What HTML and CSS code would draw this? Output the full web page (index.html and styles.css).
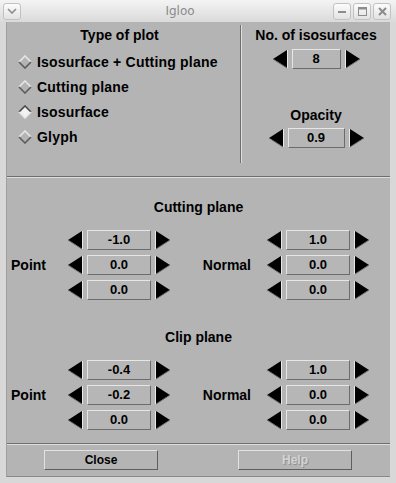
FILE: index.html
```html
<!DOCTYPE html>
<html lang="en">
<head>
  <meta charset="UTF-8">
  <meta name="viewport" content="width=device-width, initial-scale=1.0">
  <title>Igloo</title>
  <link rel="stylesheet" href="styles.css">
</head>
<body>
  <div class="window">
    <div class="titlebar">
      <span class="tb-btn">
        <svg width="10" height="6" viewBox="0 0 10 6"><polyline points="1,1 5,5 9,1" fill="none" stroke="#8c8c8c" stroke-width="1.6"/></svg>
      </span>
      <span class="title">Igloo</span>
      <span class="tb-btn">
        <svg width="8" height="8" viewBox="0 0 8 8"><rect x="0" y="4" width="8" height="2" fill="#8c8c8c"/></svg>
      </span>
      <span class="tb-btn">
        <svg width="9" height="9" viewBox="0 0 9 9"><rect x="0.5" y="0.5" width="8" height="8" fill="none" stroke="#8c8c8c"/><rect x="0.5" y="0.5" width="8" height="2" fill="#8c8c8c"/></svg>
      </span>
      <span class="tb-btn">
        <svg width="9" height="9" viewBox="0 0 9 9"><path d="M1 1 L8 8 M8 1 L1 8" stroke="#8c8c8c" stroke-width="2"/></svg>
      </span>
    </div>

    <div class="client">
      <div class="top">
        <div class="plot-type">
          <h2>Type of plot</h2>
          <label class="radio"><svg class="diamond" viewBox="0 0 14 14"><polygon points="7,1 13,7 7,13 1,7" fill="#b4b4b4"/><polyline points="1,7 7,1 13,7" fill="none" stroke="#e6e6e6" stroke-width="1.6"/><polyline points="1,7 7,13 13,7" fill="none" stroke="#5c5c5c" stroke-width="1.6"/></svg>Isosurface + Cutting plane</label>
          <label class="radio"><svg class="diamond" viewBox="0 0 14 14"><polygon points="7,1 13,7 7,13 1,7" fill="#b4b4b4"/><polyline points="1,7 7,1 13,7" fill="none" stroke="#e6e6e6" stroke-width="1.6"/><polyline points="1,7 7,13 13,7" fill="none" stroke="#5c5c5c" stroke-width="1.6"/></svg>Cutting plane</label>
          <label class="radio"><svg class="diamond" viewBox="0 0 14 14"><polygon points="7,1 13,7 7,13 1,7" fill="#f2f2f2"/><polyline points="1,7 7,1 13,7" fill="none" stroke="#4a4a4a" stroke-width="1.6"/><polyline points="1,7 7,13 13,7" fill="none" stroke="#e6e6e6" stroke-width="1.6"/></svg>Isosurface</label>
          <label class="radio"><svg class="diamond" viewBox="0 0 14 14"><polygon points="7,1 13,7 7,13 1,7" fill="#b4b4b4"/><polyline points="1,7 7,1 13,7" fill="none" stroke="#e6e6e6" stroke-width="1.6"/><polyline points="1,7 7,13 13,7" fill="none" stroke="#5c5c5c" stroke-width="1.6"/></svg>Glyph</label>
        </div>
        <div class="vsep"></div>
        <div class="settings">
          <h2>No. of isosurfaces</h2>
          <div class="spinner count">
            <svg class="arrow" viewBox="0 0 17 20"><polygon points="1,10 15,1 15,19" fill="#000"/><line x1="15.5" y1="1" x2="15.5" y2="19" stroke="#e8e8e8"/><line x1="1" y1="10" x2="15" y2="19" stroke="#6a6a6a"/></svg>
            <span class="field">8</span>
            <svg class="arrow" viewBox="0 0 17 20"><polygon points="16,10 2,1 2,19" fill="#000"/><line x1="1.5" y1="1" x2="1.5" y2="19" stroke="#e8e8e8"/><line x1="2" y1="19" x2="16" y2="10" stroke="#6a6a6a"/></svg>
          </div>
          <h2 class="opacity">Opacity</h2>
          <div class="spinner opac">
            <svg class="arrow" viewBox="0 0 17 20"><polygon points="1,10 15,1 15,19" fill="#000"/><line x1="15.5" y1="1" x2="15.5" y2="19" stroke="#e8e8e8"/><line x1="1" y1="10" x2="15" y2="19" stroke="#6a6a6a"/></svg>
            <span class="field">0.9</span>
            <svg class="arrow" viewBox="0 0 17 20"><polygon points="16,10 2,1 2,19" fill="#000"/><line x1="1.5" y1="1" x2="1.5" y2="19" stroke="#e8e8e8"/><line x1="2" y1="19" x2="16" y2="10" stroke="#6a6a6a"/></svg>
          </div>
        </div>
      </div>

      <div class="hsep"></div>

      <div class="planes" id="planes"></div>

      <div class="hsep"></div>

      <div class="actions">
        <button class="btn">Close</button>
        <button class="btn" disabled>Help</button>
      </div>
    </div>
  </div>

  <script>
    var planes = [
      { title: "Cutting plane", point: ["-1.0", "0.0", "0.0"], normal: ["1.0", "0.0", "0.0"] },
      { title: "Clip plane", point: ["-0.4", "-0.2", "0.0"], normal: ["1.0", "0.0", "0.0"] }
    ];

    var leftArrow = '<svg class="arrow" viewBox="0 0 17 20"><polygon points="1,10 15,1 15,19" fill="#000"/><line x1="15.5" y1="1" x2="15.5" y2="19" stroke="#e8e8e8"/><line x1="1" y1="10" x2="15" y2="19" stroke="#6a6a6a"/></svg>';
    var rightArrow = '<svg class="arrow" viewBox="0 0 17 20"><polygon points="16,10 2,1 2,19" fill="#000"/><line x1="1.5" y1="1" x2="1.5" y2="19" stroke="#e8e8e8"/><line x1="2" y1="19" x2="16" y2="10" stroke="#6a6a6a"/></svg>';

    function vectorGroup(cls, label, values) {
      var html = '<div class="vector ' + cls + '"><span class="vec-label">' + label + '</span><div class="spinners">';
      values.forEach(function(v) {
        html += '<div class="spinner">' + leftArrow + '<span class="field">' + v + '</span>' + rightArrow + '</div>';
      });
      return html + '</div></div>';
    }

    var container = document.getElementById("planes");
    planes.forEach(function(p) {
      var section = document.createElement("section");
      section.className = "plane";
      section.innerHTML = '<h2>' + p.title + '</h2><div class="vectors">' +
        vectorGroup("point", "Point", p.point) +
        vectorGroup("normal", "Normal", p.normal) + '</div>';
      container.appendChild(section);
    });
  </script>
</body>
</html>
```

FILE: styles.css
```css
* {
  margin: 0;
  padding: 0;
  box-sizing: border-box;
}

body {
  background: #22314e;
  font-family: "Liberation Sans", Arial, sans-serif;
  width: 396px;
  height: 483px;
  overflow: hidden;
}

.window {
  width: 396px;
  height: 483px;
  background: #d8d8d8;
  display: flex;
  flex-direction: column;
  border-radius: 3px 3px 0 0;
}

/* barre de titre */
.titlebar {
  height: 22px;
  flex: none;
  display: flex;
  align-items: center;
  gap: 2px;
  padding: 0 5px 0 3px;
  background: linear-gradient(#f4f4f4, #dadada);
}

.title {
  flex: 1;
  text-align: center;
  padding-left: 6px;
  color: #8a8a8a;
  font-family: "DejaVu Sans", sans-serif;
  font-size: 12px;
}

.tb-btn {
  width: 18px;
  height: 17px;
  border: 1px solid #c2c2c2;
  border-radius: 3px;
  background: linear-gradient(#fcfcfc, #e2e2e2);
  display: flex;
  align-items: center;
  justify-content: center;
}

.client {
  flex: 1;
  margin: 0 6px 6px;
  background: #b4b4b4;
  border-left: 1px solid #a0a0a0;
  border-bottom: 1px solid #8a8a8a;
  display: flex;
  flex-direction: column;
}

h2 {
  font-size: 14px;
  font-weight: bold;
  line-height: 18px;
  text-align: center;
  color: #000;
}

/* haut */
.top {
  height: 154px;
  flex: none;
  display: flex;
}

.plot-type {
  width: 233px;
  padding: 4px 8px 0 0;
}

.plot-type h2 {
  margin-bottom: 5px;
}

.radio {
  display: flex;
  align-items: center;
  gap: 5px;
  height: 25px;
  padding-left: 11px;
  font-size: 14px;
  font-weight: bold;
  letter-spacing: 0.2px;
}

.diamond {
  width: 14px;
  height: 14px;
}

.vsep {
  width: 2px;
  margin: 3px 0 13px;
  border-left: 1px solid #6e6e6e;
  border-right: 1px solid #dedede;
}

.settings {
  flex: 1;
  padding-top: 4px;
  display: flex;
  flex-direction: column;
  align-items: center;
}

.settings h2 {
  margin-bottom: 5px;
}

.settings .opacity {
  margin: 37px 0 4px;
}

.hsep {
  height: 2px;
  flex: none;
  border-top: 1px solid #6e6e6e;
  border-bottom: 1px solid #dedede;
}

/* spinners */
.spinner {
  display: flex;
  align-items: center;
  gap: 3px;
  height: 20px;
}

.arrow {
  width: 17px;
  height: 20px;
}

.field {
  width: 64px;
  height: 20px;
  border: 1px solid;
  border-color: #e6e6e6 #6c6c6c #6c6c6c #e6e6e6;
  background: #b6b6b6;
  font-size: 13px;
  font-weight: bold;
  line-height: 18px;
  text-align: center;
}

.count .field {
  width: 49px;
}

.opac .field {
  width: 57px;
}

/* plans */
.planes {
  height: 265px;
  flex: none;
  padding: 20px 0 13px;
}

.plane h2 {
  margin-bottom: 14px;
}

.plane + .plane {
  margin-top: 28px;
}

.vectors {
  display: flex;
  padding-left: 4px;
}

.vector {
  display: flex;
  align-items: center;
}

.vec-label {
  font-size: 14px;
  font-weight: bold;
}

.point .vec-label {
  width: 56px;
}

.normal .vec-label {
  width: 95px;
  padding-right: 15px;
  text-align: right;
}

.spinners {
  display: flex;
  flex-direction: column;
  gap: 5px;
}

/* boutons */
.actions {
  flex: 1;
  display: flex;
  gap: 80px;
  padding: 5px 0 0 37px;
}

.btn {
  width: 114px;
  height: 20px;
  border: 1px solid;
  border-color: #e2e2e2 #5e5e5e #5e5e5e #e2e2e2;
  background: #b4b4b4;
  font-family: "Liberation Sans", Arial, sans-serif;
  font-size: 12px;
  font-weight: bold;
  color: #000;
}

.btn:disabled {
  color: #d4d4d4;
  text-shadow: 1px 1px 0 #909090;
}
```
